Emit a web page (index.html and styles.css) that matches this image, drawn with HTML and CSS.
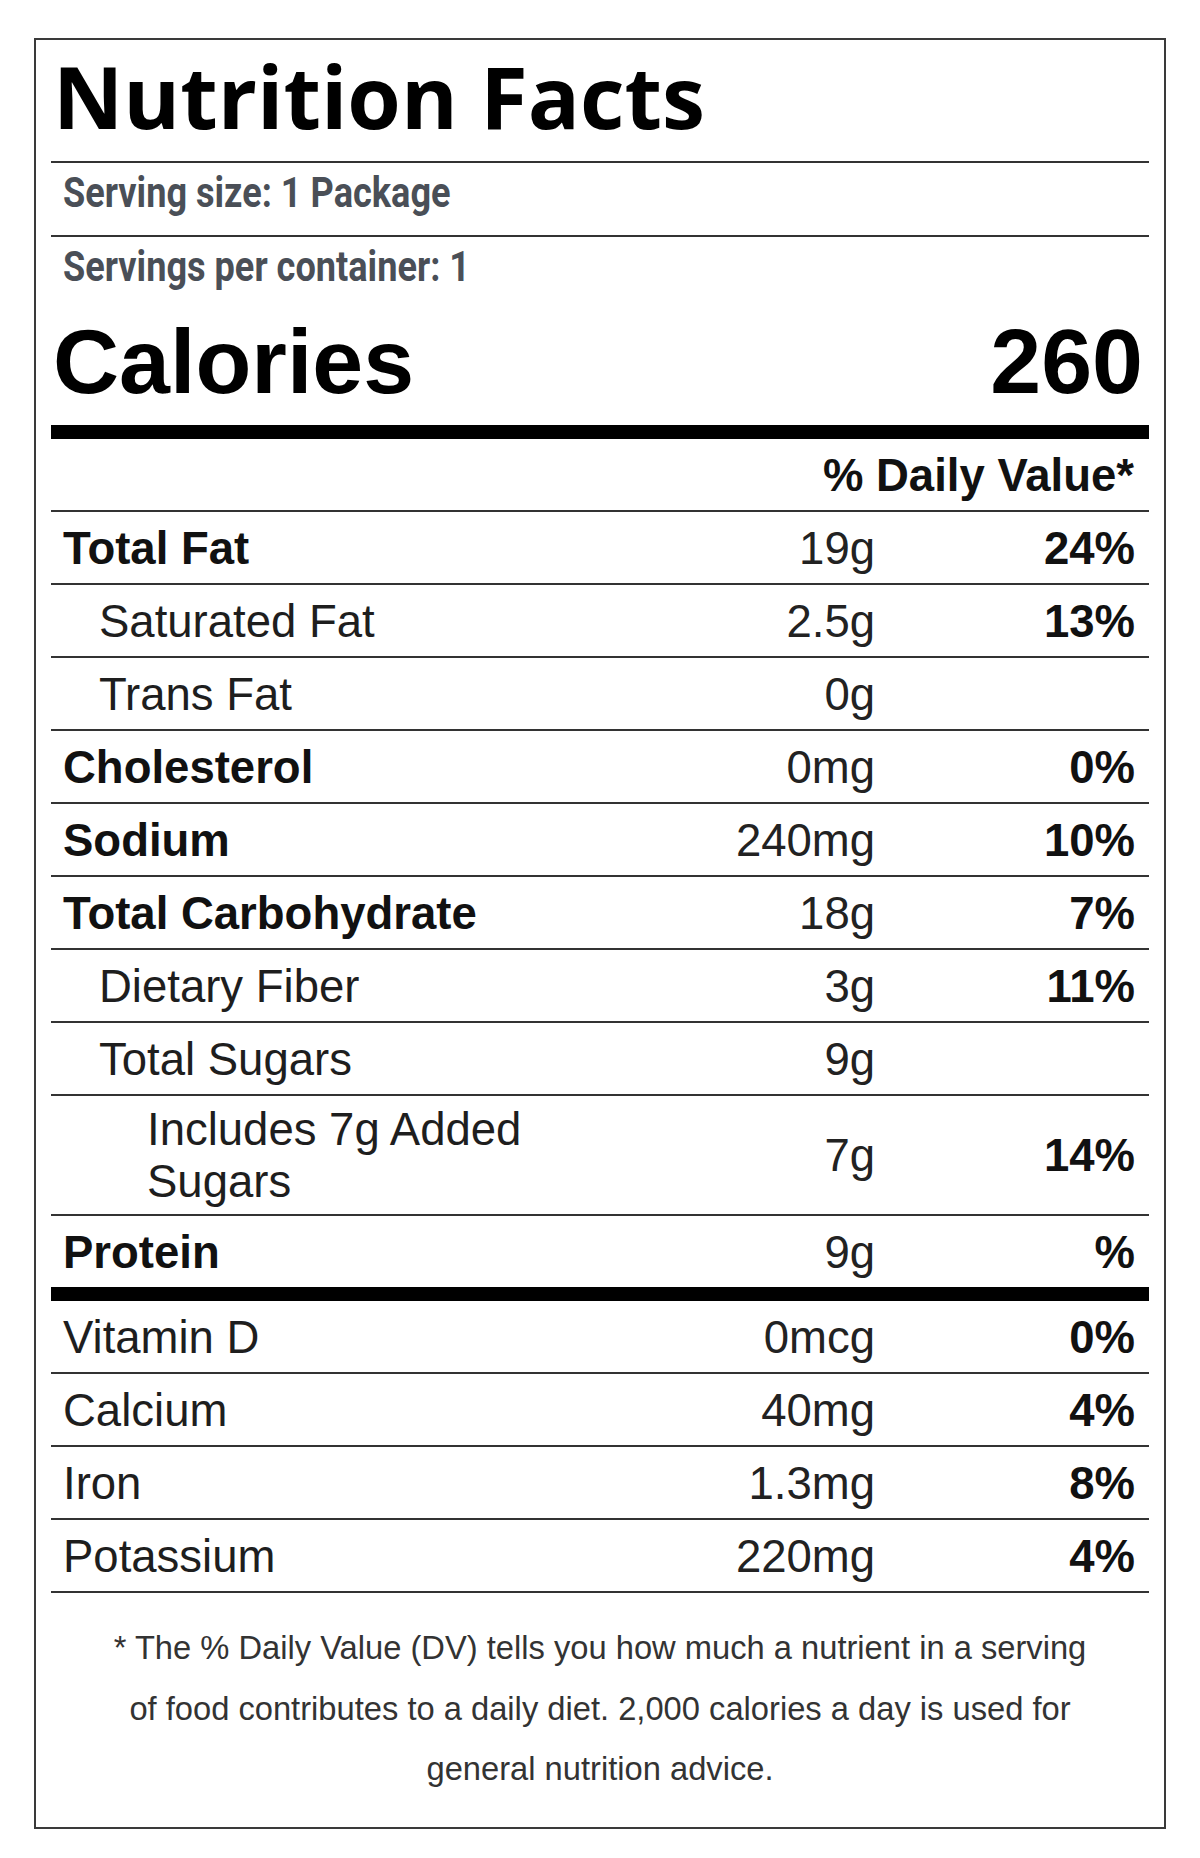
FILE: index.html
```html
<!DOCTYPE html>
<html lang="en">
<head>
<meta charset="utf-8">
<title>Nutrition Facts</title>
<link rel="stylesheet" href="styles.css">
</head>
<body>
<section class="label">
  <h1 class="title">Nutrition Facts</h1>
  <div class="serving serving-line"><span class="narrow">Serving size: 1 Package</span></div>
  <div class="serving"><span class="narrow">Servings per container: 1</span></div>
  <div class="calories">
    <span>Calories</span>
    <span>260</span>
  </div>
  <div class="dv-head">% Daily Value*</div>

  <div class="row"><span class="name bold">Total Fat</span><span class="amt">19g</span><span class="pct">24%</span></div>
  <div class="row"><span class="name sub">Saturated Fat</span><span class="amt">2.5g</span><span class="pct">13%</span></div>
  <div class="row"><span class="name sub">Trans Fat</span><span class="amt">0g</span><span class="pct"></span></div>
  <div class="row"><span class="name bold">Cholesterol</span><span class="amt">0mg</span><span class="pct">0%</span></div>
  <div class="row"><span class="name bold">Sodium</span><span class="amt">240mg</span><span class="pct">10%</span></div>
  <div class="row"><span class="name bold">Total Carbohydrate</span><span class="amt">18g</span><span class="pct">7%</span></div>
  <div class="row"><span class="name sub">Dietary Fiber</span><span class="amt">3g</span><span class="pct">11%</span></div>
  <div class="row"><span class="name sub">Total Sugars</span><span class="amt">9g</span><span class="pct"></span></div>
  <div class="row row-tall"><span class="name sub2">Includes 7g Added Sugars</span><span class="amt">7g</span><span class="pct">14%</span></div>
  <div class="row row-thick"><span class="name bold">Protein</span><span class="amt">9g</span><span class="pct">%</span></div>

  <div class="row"><span class="name">Vitamin D</span><span class="amt">0mcg</span><span class="pct">0%</span></div>
  <div class="row"><span class="name">Calcium</span><span class="amt">40mg</span><span class="pct">4%</span></div>
  <div class="row"><span class="name">Iron</span><span class="amt">1.3mg</span><span class="pct">8%</span></div>
  <div class="row"><span class="name">Potassium</span><span class="amt">220mg</span><span class="pct">4%</span></div>

  <p class="footnote">* The % Daily Value (DV) tells you how much a nutrient in a serving of food contributes to a daily diet. 2,000 calories a day is used for general nutrition advice.</p>
</section>
</body>
</html>
```

FILE: styles.css
```css
html, body {
  margin: 0;
  padding: 0;
  background: #ffffff;
}

body {
  font-family: "Liberation Sans", Arial, sans-serif;
  color: #1a1a1a;
}

.label {
  box-sizing: border-box;
  width: 1132px;
  margin: 38px 0 0 34px;
  border: 2px solid #3a3a3a;
  padding: 0 15px;
}

.title {
  margin: 0;
  padding: 11px 0 20px 2px;
  font-family: "Open Sans", Roboto, "Liberation Sans", sans-serif;
  font-weight: 700;
  font-size: 86.5px;
  line-height: 90px;
  color: #000;
  border-bottom: 2px solid #333;
}

.serving {
  padding: 7px 0 20px 12px;
  font-family: Roboto, "Liberation Sans", sans-serif;
  font-weight: 700;
  font-size: 42px;
  line-height: 45px;
  color: #4a4f57;
  white-space: nowrap;
}

.narrow {
  display: inline-block;
  transform: scaleX(0.86);
  transform-origin: left center;
}

.serving-line {
  border-bottom: 2px solid #333;
}

.calories {
  display: flex;
  justify-content: space-between;
  padding: 7px 6px 18px 2px;
  font-weight: 700;
  font-size: 91.5px;
  line-height: 91px;
  color: #000;
  border-bottom: 14px solid #000;
}

.dv-head {
  box-sizing: border-box;
  height: 73px;
  padding: 8px 15px 6px 0;
  display: flex;
  align-items: center;
  justify-content: flex-end;
  font-weight: 700;
  font-size: 45.5px;
  color: #111;
  border-bottom: 2px solid #333;
}

.row {
  box-sizing: border-box;
  min-height: 73px;
  padding: 8px 0 6px;
  display: grid;
  grid-template-columns: 1fr 240px 274px;
  align-items: center;
  font-size: 45.5px;
  border-bottom: 2px solid #333;
}

.row-tall {
  min-height: 119px;
}

.row-thick {
  min-height: 85px;
  border-bottom: 14px solid #000;
}

.name {
  padding-left: 12px;
  padding-right: 20px;
  color: #1e1e1e;
}

.name.bold {
  font-weight: 700;
  color: #111;
}

.name.sub {
  padding-left: 48px;
}

.name.sub2 {
  padding-left: 96px;
}

.amt {
  text-align: right;
  color: #222;
}

.pct {
  text-align: right;
  padding-right: 14px;
  font-weight: 700;
  color: #111;
}

.footnote {
  margin: 0;
  padding: 25px 50px 27px;
  text-align: center;
  font-size: 32.7px;
  line-height: 60.5px;
  color: #333;
}
```
